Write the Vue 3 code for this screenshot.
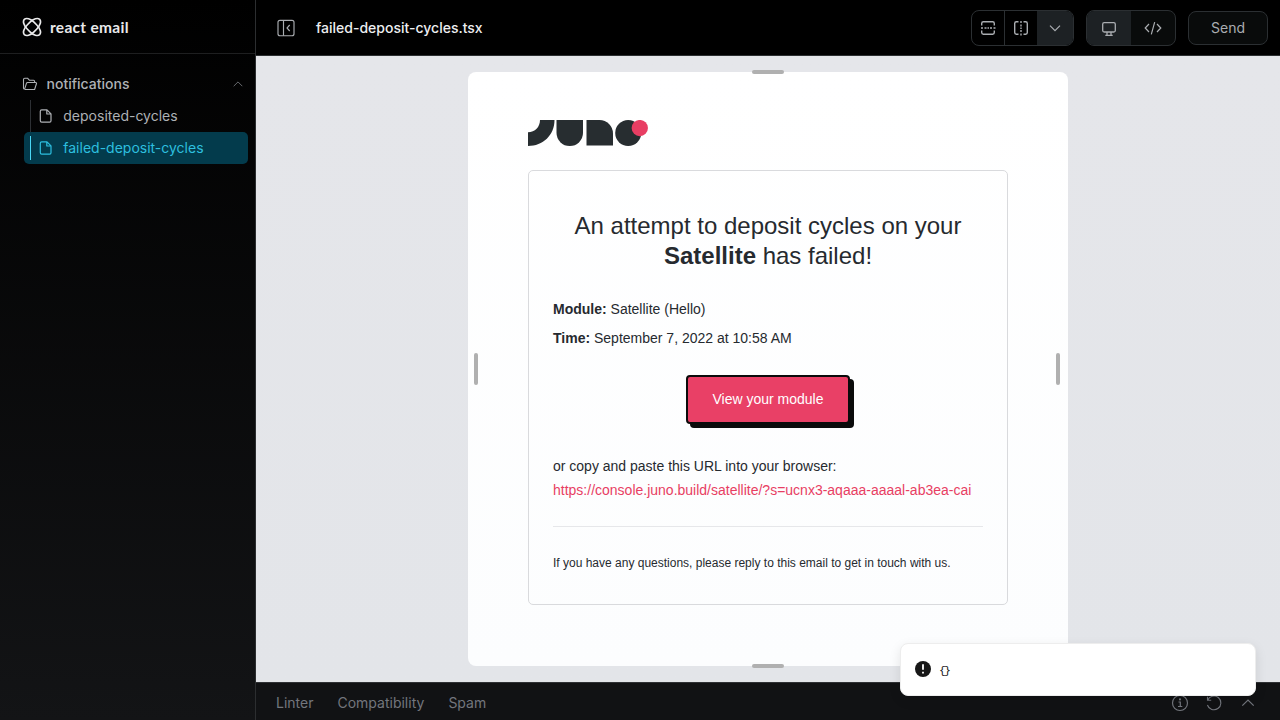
<script setup>
const files = [
  { name: 'deposited-cycles', active: false },
  { name: 'failed-deposit-cycles', active: true },
]
const tabs = ['Linter', 'Compatibility', 'Spam']
</script>

<template>
  <div class="app">
    <aside class="sidebar">
      <div class="brand">
        <svg class="brand-icon" width="20" height="20" viewBox="0 0 20 20" fill="none" stroke="currentColor" stroke-width="1.700">
          <rect x="-0.800" y="5.200" width="21.600" height="9.600" rx="8.800" ry="4.800" transform="rotate(45 10 10)" />
          <rect x="-0.800" y="5.200" width="21.600" height="9.600" rx="8.800" ry="4.800" transform="rotate(-45 10 10)" />
        </svg>
        <span class="brand-name">react email</span>
      </div>
      <nav class="tree">
        <div class="folder">
          <svg width="16" height="16" viewBox="0 0 16 16" fill="none" stroke="currentColor" stroke-width="1.100" stroke-linejoin="round">
            <path d="M3.500 13.500H12.600L14.500 7.500C14.700 6.900 14.300 6.500 13.700 6.500H5.500C5 6.500 4.700 6.700 4.500 7.200L2.700 12.800C2 13.200 1.500 12.700 1.500 12V3.500C1.500 2.700 1.900 2.200 2.700 2.200H5.500L7.300 4.200H11.500C12.200 4.200 12.600 4.600 12.600 5.300V6.500M3.500 13.500H2.800" />
          </svg>
          <span class="folder-name">notifications</span>
          <svg class="folder-chevron" width="16" height="16" viewBox="0 0 16 16" fill="none" stroke="currentColor"><path d="M3.700 10.200L8 5.900L12.300 10.200" /></svg>
        </div>
        <div class="files">
          <div v-for="file in files" :key="file.name" class="file" :class="{ active: file.active }">
            <span class="guide"></span>
            <svg width="14" height="16" viewBox="0 0 14 16" fill="none" stroke="currentColor" stroke-width="1.200" stroke-linejoin="round">
              <path d="M2.700 1.800H8L12 5.800V12.800C12 13.700 11.600 14.200 10.700 14.200H2.700C1.800 14.200 1.300 13.700 1.300 12.800V3.200C1.300 2.300 1.800 1.800 2.700 1.800ZM7.800 1.800V6H12" />
            </svg>
            <span class="file-name">{{ file.name }}</span>
          </div>
        </div>
      </nav>
    </aside>

    <main class="main">
      <header class="topbar">
        <svg class="panel-icon" width="20" height="20" viewBox="0 0 20 20" fill="none" stroke="currentColor" stroke-width="1.150">
          <rect x="2" y="2.300" width="16" height="15.400" rx="2" />
          <path d="M7.500 2.300V17.700M13.700 7L11 10L13.700 13" />
        </svg>
        <h1 class="title">failed-deposit-cycles.tsx</h1>
        <div class="group modes">
          <button class="cell">
            <svg width="18" height="18" viewBox="0 0 18 18" fill="none" stroke="currentColor" stroke-width="1.400">
              <path d="M2.700 6.500V4.400Q2.700 2.700 4.400 2.700H13.600Q15.300 2.700 15.300 4.400V6.500M2.700 11.500V13.600Q2.700 15.300 4.400 15.300H13.600Q15.300 15.300 15.300 13.600V11.500M2 9H4M5.500 9H7.500M8.500 9H10M11 9H13M14.500 9H16.500" />
            </svg>
          </button>
          <button class="cell">
            <svg width="18" height="18" viewBox="0 0 18 18" fill="none" stroke="currentColor" stroke-width="1.400">
              <path d="M6.500 2.700H4.400Q2.700 2.700 2.700 4.400V13.600Q2.700 15.300 4.400 15.300H6.500M11.500 2.700H13.600Q15.300 2.700 15.300 4.400V13.600Q15.300 15.300 13.600 15.300H11.500M9 2V4M9 5.500V7.500M9 8.500V10M9 11V13M9 14.500V16.500" />
            </svg>
          </button>
          <button class="cell lit">
            <svg width="16" height="16" viewBox="0 0 16 16" fill="none" stroke="currentColor" stroke-width="1.200"><path d="M3 5.700L8 10.700L13 5.700" /></svg>
          </button>
        </div>
        <div class="group views">
          <button class="cell lit">
            <svg width="18" height="18" viewBox="0 0 18 18" fill="none" stroke="currentColor" stroke-width="1.300">
              <rect x="2.700" y="3.700" width="12.600" height="9.300" rx="1.500" />
              <path d="M7 13V16M11 13V16M5.300 16.300H12.700" />
            </svg>
          </button>
          <button class="cell">
            <svg width="20" height="18" viewBox="0 0 20 18" fill="none" stroke="currentColor" stroke-width="1.200"><path d="M6 5L2.200 9L6 13M14 5L17.800 9L14 13M11.700 3.200L8.300 15.300" /></svg>
          </button>
        </div>
        <button class="send">Send</button>
      </header>

      <section class="stage">
        <div class="email">
          <i class="handle top"></i><i class="handle bottom"></i><i class="handle left"></i><i class="handle right"></i>
          <svg class="juno" width="120" height="26" viewBox="0 0 120 26">
            <g fill="#272d30">
              <path d="M12 0H26.500C26.500 15 15 26 0 26V12.300C7 12.300 12 7 12 0Z" />
              <path d="M28.500 0H55V12.800A13.250 13.200 0 0 1 28.500 12.800Z" />
              <path d="M58.500 0H71.500A13.500 13.500 0 0 1 85 13.500V25.500H58.500Z" />
              <circle cx="100.200" cy="13" r="13" />
            </g>
            <circle cx="111.800" cy="8.100" r="8.150" fill="#e83e63" />
          </svg>
          <article class="card">
            <h2>An attempt to deposit cycles on your <strong>Satellite</strong> has failed!</h2>
            <p class="detail"><strong>Module:</strong> Satellite (Hello)</p>
            <p class="detail"><strong>Time:</strong> September 7, 2022 at 10:58 AM</p>
            <div class="cta-row"><a class="cta">View your module</a></div>
            <p class="copy">or copy and paste this URL into your browser:<br><a class="link">https://console.juno.build/satellite/?s=ucnx3-aqaaa-aaaal-ab3ea-cai</a></p>
            <hr>
            <p class="help">If you have any questions, please reply to this email to get in touch with us.</p>
          </article>
        </div>
      </section>

      <footer class="bottombar">
        <span v-for="tab in tabs" :key="tab" class="tab">{{ tab }}</span>
        <div class="tools">
          <svg width="18" height="18" viewBox="0 0 18 18" fill="none" stroke="currentColor" stroke-width="1.200">
            <circle cx="9" cy="9" r="7.500" /><path d="M7.500 8H9.300V12.500M7 12.500H11.300" /><circle cx="9" cy="5.400" r=".5" fill="currentColor" />
          </svg>
          <svg width="18" height="18" viewBox="0 0 18 18" fill="none" stroke="currentColor" stroke-width="1.100">
            <path d="M2.500 2.700V6.300H6.200M2.600 6.200A6.900 6.900 0 1 1 2.400 11" />
          </svg>
          <svg width="18" height="18" viewBox="0 0 18 18" fill="none" stroke="currentColor" stroke-width="1.200"><path d="M3.300 11.700L9 6L14.700 11.700" /></svg>
        </div>
      </footer>
    </main>

    <div class="toast">
      <svg width="16" height="16" viewBox="0 0 16 16"><circle cx="8" cy="8" r="8" fill="#171717" /><path d="M8 3.300V8.800M8 10.800V12.600" stroke="#fff" stroke-width="1.800" /></svg>
      <span>{}</span>
    </div>
  </div>
</template>

<style>
body { margin: 0; background: #000; }
</style>

<style scoped>
* { box-sizing: border-box; }
.app {
  position: relative;
  display: flex;
  width: 1280px;
  height: 720px;
  overflow: hidden;
  background: linear-gradient(#000, #131416);
  font-family: Inter, sans-serif;
  font-size: 14px;
}
svg { display: block; flex: none; }
p, h1, h2 { margin: 0; }
button { margin: 0; padding: 0; border: 0; background: none; color: inherit; font: inherit; }

.sidebar { width: 256px; border-right: 1px solid #2c2e30; color: #aeb1b5; }
.brand { display: flex; align-items: center; height: 54px; padding-left: 22px; border-bottom: 1px solid #1e1f20; color: #e9e9ea; }
.brand-name { margin-left: 8px; font: 700 15.500px/20px Lato, sans-serif; letter-spacing: 0.300px; }
.tree { padding: 14px 7px 0 0; }
.folder { display: flex; align-items: center; height: 32px; padding-left: 22px; }
.folder-name { margin-left: 8.500px; padding-bottom: 2px; font-weight: 500; }
.folder-chevron { margin-left: auto; margin-right: 2px; color: #66696d; }
.files { margin-left: 24px; }
.file { position: relative; display: flex; align-items: center; height: 32px; padding-left: 15px; border-radius: 5px; }
.file-name { margin-left: 10.300px; padding-bottom: 2px; }
.guide { position: absolute; left: 6px; top: 0; width: 1px; height: 32px; background: #2d3034; }
.file.active { background: #033b4c; color: #2dbfdf; }
.active .guide { top: 4px; height: 24px; background: #4ad8f5; }

.main { display: flex; flex: 1; flex-direction: column; min-width: 0; }
.topbar { display: flex; align-items: center; height: 56px; padding: 0 12px 0 20px; border-bottom: 1px solid #2c2f31; background: #000; color: #aaadb1; }
.title { margin-left: 20px; margin-right: auto; color: #edeef0; font-size: 14px; font-weight: 500; }
.group { display: flex; height: 36px; overflow: hidden; border: 1px solid #2b2f32; border-radius: 8px; }
.cell { display: flex; align-items: center; justify-content: center; }
.modes { width: 103px; }
.modes .cell { width: 32px; }
.modes .cell + .cell { width: 33px; border-left: 1px solid #2b2f32; }
.modes .cell.lit { flex: 1; border-left: 0; padding-right: 1px; }
.lit { background: #1d2124; }
.views { width: 90px; margin-left: 12px; background: #090b0b; }
.views .cell { width: 44px; }
.send { width: 80px; height: 34px; margin-left: 12px; border: 1px solid #2b2f32; border-radius: 8px; background: #090b0b; }

.stage { display: flex; justify-content: center; flex: 1; padding: 16px 0; background: linear-gradient(#e5e6ea, #e3e5e9); }
.email {
  position: relative;
  width: 600px;
  height: 594px;
  padding: 48px 60px 0;
  border-radius: 8px;
  background: linear-gradient(#fff, #fcfdfe);
  color: #262a2f;
  font-family: "Liberation Sans", Arial, sans-serif;
}
.handle { position: absolute; border-radius: 2px; background: #b0b0b0; }
.top, .bottom { left: 284px; width: 32px; height: 4px; }
.top { top: -2px; }
.bottom { bottom: -2px; }
.left, .right { top: 281px; width: 4px; height: 32px; }
.left { left: 6px; }
.right { right: 8px; }
.card { height: 435px; margin-top: 24px; padding: 40px 24px; border: 1px solid #d9dadd; border-radius: 5px; }
h2 { font-size: 24px; font-weight: 400; line-height: 30px; text-align: center; }
.detail { font-size: 14px; line-height: 24px; }
h2 + .detail { margin: 26px 0 5px; }
.cta-row { display: flex; justify-content: center; margin-top: 25px; }
.cta { width: 164px; height: 49px; border: 2px solid #0b0b0b; border-radius: 4px; background: #e94066; box-shadow: 4px 4px 0 #0b0b0b; color: #fff; line-height: 45px; text-align: center; }
.copy { margin-top: 30px; line-height: 24px; }
.link { color: #e83e63; }
hr { margin: 24px 0; border: 0; border-top: 1px solid #e6e7ea; }
.help { font-size: 12px; line-height: 24px; }

.bottombar { display: flex; align-items: center; gap: 24px; height: 38px; padding: 3px 23px 0 20px; border-top: 1px solid #2f3134; background: #111214; color: #73767d; }
.tab { padding-bottom: 2px; }
.tools { display: flex; gap: 16px; margin-left: auto; }
.toast {
  position: absolute;
  left: 900px;
  top: 643px;
  display: flex;
  align-items: center;
  width: 356px;
  height: 53px;
  padding-left: 15px;
  border: 1px solid #ededed;
  border-radius: 8px;
  background: #fff;
  box-shadow: 0 4px 12px rgba(0, 0, 0, 0.1);
  color: #171717;
}
.toast svg { margin-left: -1px; margin-bottom: 2px; }
.toast span { margin-left: 8px; padding-top: 2px; font: 400 11.500px/16px "Liberation Mono", monospace; letter-spacing: -2px; }
</style>
